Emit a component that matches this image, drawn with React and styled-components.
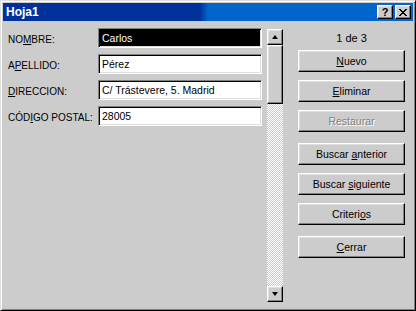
import React from "react";
import styled, { createGlobalStyle } from "styled-components";

const fields = [
  { pre: "NO", key: "M", post: "BRE:", value: "Carlos", selected: true },
  { pre: "A", key: "P", post: "ELLIDO:", value: "Pérez" },
  { pre: "", key: "D", post: "IRECCION:", value: "C/ Trástevere, 5. Madrid" },
  { pre: "CÓD", key: "I", post: "GO POSTAL:", value: "28005" },
];

const App = () => {
  return (
    <>
      <GlobalStyle />
      <Window>
        <TitleBar>
          <Title>Hoja1</Title>
          <TitleButtons>
            <TitleButton>?</TitleButton>
            <TitleButton>
              <svg width="8" height="7" viewBox="0 0 8 7">
                <path
                  d="M0 0h2v1h1v1h2V1h1V0h2v1H7v1H6v1H5v1h1v1h1v1h1v1H6V6H5V5H3v1H2v1H0V6h1V5h1V4h1V3H2V2H1V1H0z"
                  fill="#000"
                />
              </svg>
            </TitleButton>
          </TitleButtons>
        </TitleBar>

        <Body>
          <Form>
            {fields.map((f) => (
              <React.Fragment key={f.value}>
                <Label>
                  {f.pre}
                  <Key>{f.key}</Key>
                  {f.post}
                </Label>
                <Field selected={f.selected}>
                  <FieldText selected={f.selected}>{f.value}</FieldText>
                </Field>
              </React.Fragment>
            ))}
          </Form>

          <ScrollBar>
            <ScrollButton>
              <Arrow />
            </ScrollButton>
            <Thumb />
            <Track />
            <ScrollButton>
              <Arrow down />
            </ScrollButton>
          </ScrollBar>

          <Actions>
            <Counter>1 de 3</Counter>
            <ButtonGroup>
              <Button>
                <span>
                  <Key>N</Key>uevo
                </span>
              </Button>
              <Button>
                <span>
                  <Key>E</Key>liminar
                </span>
              </Button>
              <Button disabled>
                <span>Restaurar</span>
              </Button>
            </ButtonGroup>
            <ButtonGroup>
              <Button>
                <span>
                  Buscar <Key>a</Key>nterior
                </span>
              </Button>
              <Button>
                <span>
                  Buscar <Key>s</Key>iguiente
                </span>
              </Button>
              <Button>
                <span>
                  Criteri<Key>o</Key>s
                </span>
              </Button>
            </ButtonGroup>
            <ButtonGroup>
              <Button>
                <span>
                  <Key>C</Key>errar
                </span>
              </Button>
            </ButtonGroup>
          </Actions>
        </Body>
      </Window>
    </>
  );
};

export default App;

const GlobalStyle = createGlobalStyle`
  body {
    margin: 0;
    background: #cccccc;
    font-family: "Liberation Sans", Arial, sans-serif;
    font-size: 10.5px;
  }
`;

const raised = `
  background: #cccccc;
  border-top: 1px solid #fff;
  border-left: 1px solid #fff;
  border-right: 1px solid #000;
  border-bottom: 1px solid #000;
  box-shadow: inset -1px -1px #808080, inset 1px 1px #dfdfdf;
  box-sizing: border-box;
`;

const Window = styled.div`
  width: 416px;
  height: 311px;
  box-sizing: border-box;
  background: #cccccc;
  border-top: 1px solid #dfdfdf;
  border-left: 1px solid #dfdfdf;
  border-right: 1px solid #000;
  border-bottom: 1px solid #000;
  box-shadow: inset 1px 1px #fff, inset -1px -1px #808080;
  padding: 2px;
  display: flex;
  flex-direction: column;
`;

const TitleBar = styled.div`
  height: 18px;
  flex-shrink: 0;
  display: flex;
  align-items: center;
  justify-content: space-between;
  padding: 0 2px 0 2px;
  background: linear-gradient(
    to right,
    #00329a 0,
    #00329a 197px,
    #0066cc 205px,
    #0066cc 100%
  );
`;

const Title = styled.span`
  color: #fff;
  font-weight: bold;
  font-size: 12px;
  padding-left: 1px;
`;

const TitleButtons = styled.div`
  display: flex;
  gap: 2px;
`;

const TitleButton = styled.div`
  ${raised}
  width: 16px;
  height: 14px;
  display: flex;
  align-items: center;
  justify-content: center;
  font-weight: bold;
  font-size: 11px;
  line-height: 1;
  color: #000;
`;

const Body = styled.div`
  flex: 1;
  display: flex;
  align-items: flex-start;
  padding: 8px 8px 0 5px;
`;

const Form = styled.div`
  display: grid;
  grid-template-columns: 90px 164px;
  grid-auto-rows: 20px;
  row-gap: 6px;
  margin-top: -1px;
`;

const Label = styled.div`
  font-size: 10px;
  line-height: 14px;
  padding-top: 5px;
  color: #000;
  white-space: nowrap;
`;

const Key = styled.u`
  text-decoration: underline;
  text-underline-offset: 1px;
`;

const Field = styled.div`
  box-sizing: border-box;
  border-top: 1px solid #808080;
  border-left: 1px solid #808080;
  border-right: 1px solid #fff;
  border-bottom: 1px solid #fff;
  box-shadow: inset 1px 1px #000, inset -1px -1px #dfdfdf;
  background: ${({ selected }) => (selected ? "#000" : "#fff")};
  padding: 2px 3px;
  display: flex;
  align-items: center;
`;

const FieldText = styled.span`
  color: ${({ selected }) => (selected ? "#fff" : "#000")};
  line-height: 14px;
  white-space: nowrap;
`;

const ScrollBar = styled.div`
  width: 16px;
  height: 273px;
  margin-left: 5px;
  display: flex;
  flex-direction: column;
`;

const ScrollButton = styled.div`
  ${raised}
  width: 16px;
  height: 16px;
  flex-shrink: 0;
  display: flex;
  align-items: center;
  justify-content: center;
`;

const Arrow = styled.div`
  width: 0;
  height: 0;
  border-left: 3px solid transparent;
  border-right: 3px solid transparent;
  ${({ down }) =>
    down ? "border-top: 4px solid #000;" : "border-bottom: 4px solid #000;"}
`;

const Thumb = styled.div`
  ${raised}
  height: 59px;
  flex-shrink: 0;
`;

const Track = styled.div`
  flex: 1;
  background: repeating-conic-gradient(#fff 0% 25%, #cccccc 0% 50%) 0 0 / 2px
    2px;
`;

const Actions = styled.div`
  width: 107px;
  margin-left: 15px;
  display: flex;
  flex-direction: column;
  gap: 11px;
`;

const Counter = styled.div`
  text-align: center;
  font-size: 11px;
  line-height: 18px;
  margin-bottom: -8px;
  color: #000;
`;

const ButtonGroup = styled.div`
  display: flex;
  flex-direction: column;
  gap: 8px;
`;

const Button = styled.div`
  ${raised}
  height: 22px;
  display: flex;
  align-items: center;
  justify-content: center;
  color: ${({ disabled }) => (disabled ? "#808080" : "#000")};
  text-shadow: ${({ disabled }) => (disabled ? "1px 1px #fff" : "none")};
  white-space: nowrap;
`;
